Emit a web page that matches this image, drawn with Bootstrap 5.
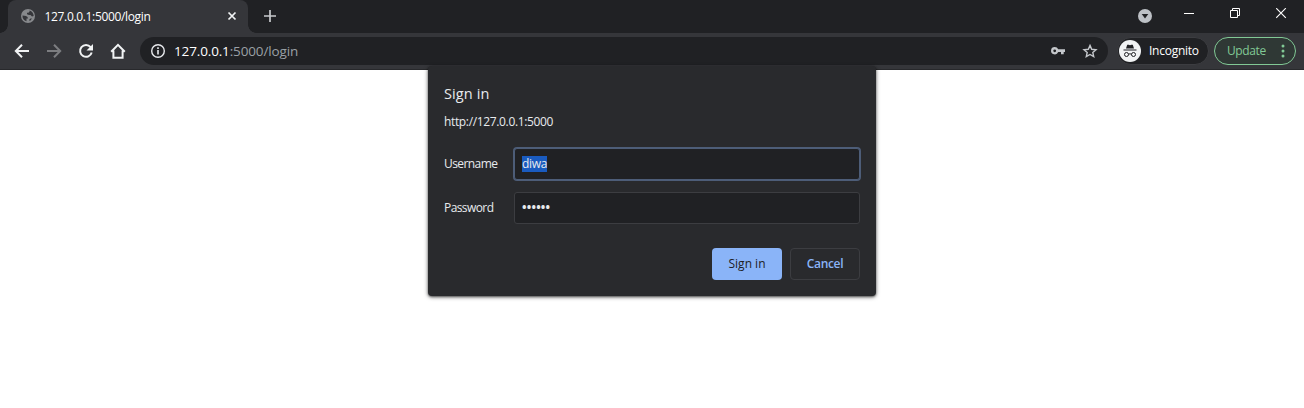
<!DOCTYPE html>
<html lang="en">
<head>
<meta charset="utf-8">
<meta name="viewport" content="width=device-width, initial-scale=1">
<title>127.0.0.1:5000/login</title>
<link href="https://cdn.jsdelivr.net/npm/bootstrap@5.3.0/dist/css/bootstrap.min.css" rel="stylesheet">
<style>
body{font-family:"Open Sans","Noto Sans",sans-serif;font-size:12px;line-height:16px;color:#e8eaed;background:#fff;height:408px;overflow:hidden}
svg{display:block;flex:none}
.tabstrip{height:33px;background:#202124;padding-left:8px}
.browser-tab{position:relative;width:240px;height:33px;background:#35363a;border-radius:8px 8px 0 0;padding:0 10px 0 12px}
.browser-tab::before,.browser-tab::after{content:"";position:absolute;bottom:0;width:8px;height:8px}
.browser-tab::before{left:-8px;background:radial-gradient(circle at 0 0,transparent 7.5px,#35363a 8px)}
.browser-tab::after{right:-8px;background:radial-gradient(circle at 100% 0,transparent 7.5px,#35363a 8px)}
.tab-title{margin-left:8.5px;font-size:12px;letter-spacing:-.34px;color:#fff}
.browser-tab>svg,.new-tab{margin-bottom:1px}
.new-tab{margin-left:15px}
.window-controls{height:33px}
.window-controls svg{margin:0 35px 6px 0}
.window-controls .tab-search{margin:0 32px 2px 0}
.window-controls .win-close{margin-right:17px}
.toolbar{height:37px;background:#35363a;border-bottom:1px solid #28292c;padding:0 8px 0 14px}
.omnibox{height:28px;width:968px;margin-left:14px;border-radius:14px;background:#202124;padding:0 10px}
.url{font-size:13.5px;letter-spacing:-.14px;margin-left:8px;color:#9aa0a6}
.incog{width:92px;height:28px;margin-left:9px;border:1px solid #3c3d41;border-radius:14px;background:#202124;padding-left:1px}
.incog-name{margin-left:8px;letter-spacing:-.25px}
.update{width:82px;height:28px;margin-left:5px;border:1px solid #81c995;border-radius:14px;background:#2f3835;color:#81c995;padding:0 10.5px 0 12px}
.update span{letter-spacing:-.38px}
.signin{position:relative;width:448px;height:230px;margin-top:-4px;background:#292a2d;border-radius:4px;padding:18px 16px 16px;box-shadow:0 1px 4px rgba(0,0,0,.55),0 1px 2px rgba(0,0,0,.4)}
.signin h1{font-size:14.5px;line-height:20px;font-weight:400;letter-spacing:.12px;margin:0 0 10px}
.origin{letter-spacing:-.35px;margin-bottom:18px}
.field-row{margin-bottom:12px}
.field-name{width:70px;letter-spacing:-.58px}
.signin .form-control{width:346px;height:32px;min-height:0;border:1px solid #3c3d41;border-radius:3px;background:#202124;color:#e8eaed;padding:7px;font-size:12px;line-height:16px}
.signin .focused{border-color:#4d5d78;box-shadow:0 0 0 1px #4d5d78}
.picked{background:#1a5bbf;color:#e8eaed;display:inline-block;height:16px;line-height:16px;letter-spacing:-.3px}
.signin .dots{letter-spacing:.2px;font-weight:700}
.signin .btn{width:70px;height:32px;padding:0;font-size:12px;line-height:16px;border-radius:4px;font-weight:500}
.signin .btn-go,.signin .btn-go:hover{background:#8ab4f8;color:#202124}
.signin .btn-stop,.signin .btn-stop:hover{border:1px solid #3c3d41;color:#8ab4f8;font-weight:600;letter-spacing:-.35px}
</style>
</head>
<body>
<header>
  <div class="tabstrip d-flex align-items-center">
    <div class="browser-tab d-flex align-items-center">
      <svg width="16" height="16" viewBox="0 0 16 16"><circle cx="8" cy="8" r="7" fill="#87898c"/><path d="M2.500 7.500 6 8l1.500 1 .5 1.500H6.500v2.800C4 12.700 2.200 10.500 2.500 7.500ZM9.500 2.500v1.300L8.300 4.700H7v1.500l2 .8h1.500L12 8.500 13.700 8c0-2.500-1.700-4.700-4.200-5.500ZM9 12l1.500-1.500H12L10 13Z" fill="#35363a"/></svg>
      <span class="tab-title">127.0.0.1:5000/login</span>
      <svg class="ms-auto" width="12" height="12" viewBox="0 0 12 12"><path d="m2.500 2.500 7 7m0-7-7 7" stroke="#f1f3f4" stroke-width="1.700"/></svg>
    </div>
    <svg class="new-tab" width="14" height="14" viewBox="0 0 14 14"><path d="M7 1v12M1 7h12" stroke="#c8cacd" stroke-width="1.700"/></svg>
    <div class="window-controls d-flex align-items-center ms-auto">
      <svg class="tab-search" width="14" height="14" viewBox="0 0 14 14"><circle cx="7" cy="7" r="7" fill="#bdc1c6"/><path d="M3.700 5h6.600L7 9.500Z" fill="#202124"/></svg>
      <svg width="11" height="11" viewBox="0 0 11 11"><path d="M0 5.500h10" stroke="#fff"/></svg>
      <svg width="11" height="11" viewBox="0 0 11 11"><path d="M.5 2.500h7v7h-7zM2.500 2.500v-2h7v7h-2" fill="none" stroke="#fff"/></svg>
      <svg class="win-close" width="11" height="11" viewBox="0 0 11 11"><path d="m.2.200 9.600 9.600m0-9.600-9.600 9.600" stroke="#fff" stroke-width="1.150"/></svg>
    </div>
  </div>
  <div class="toolbar d-flex align-items-center">
    <div class="d-flex gap-3">
      <svg width="16" height="16" viewBox="0 0 16 16"><path d="M15 8H2.500M8 1.700 1.800 8 8 14.300" fill="none" stroke="#f1f3f4" stroke-width="2"/></svg>
      <svg width="16" height="16" viewBox="0 0 16 16"><path d="M1 8h12.500M8 1.700 14.200 8 8 14.300" fill="none" stroke="#7c7d80" stroke-width="2"/></svg>
      <svg width="16" height="16" viewBox="0 0 16 16"><path d="M12.600 4.200A5.900 5.900 0 1 0 13.700 9.500" fill="none" stroke="#f1f3f4" stroke-width="2"/><path d="M15 1v6.500H8.500Z" fill="#f1f3f4"/></svg>
      <svg width="16" height="16" viewBox="0 0 16 16"><path d="M1.200 8.700 8 1.900l6.800 6.800M3.400 7.500v7.300h9.200V7.500" fill="none" stroke="#f1f3f4" stroke-width="2"/></svg>
    </div>
    <div class="omnibox d-flex align-items-center">
      <svg width="16" height="16" viewBox="0 0 16 16"><circle cx="8" cy="8" r="6.300" fill="none" stroke="#e8eaed" stroke-width="1.400"/><path d="M8 7v4.500M8 4.300V6" stroke="#e8eaed" stroke-width="1.600"/></svg>
      <span class="url"><span class="text-white">127.0.0.1</span>:5000/login</span>
      <svg class="ms-auto" width="16" height="16" viewBox="0 0 16 16"><path fill-rule="evenodd" d="M4.700 4a3.700 3.700 0 1 0 3.500 5H11v2.300h2.700V9H15V6.300H8.200A3.700 3.700 0 0 0 4.700 4Zm0 2.400a1.400 1.400 0 1 1 0 2.800 1.400 1.400 0 0 1 0-2.800Z" fill="#c4c7cb"/></svg>
      <svg class="ms-3" width="16" height="16" viewBox="0 0 16 16"><path d="m8 2.400 1.700 3.900 4.300.4-3.200 2.800.9 4.200L8 11.500l-3.700 2.200.9-4.200L2 6.700l4.300-.4Z" fill="none" stroke="#c4c7cb" stroke-width="1.400"/></svg>
    </div>
    <div class="incog d-flex align-items-center">
      <svg width="22" height="22" viewBox="0 0 22 22"><circle cx="11" cy="11" r="11" fill="#f1f3f4"/><path d="M4.500 9.500h13v1h-13ZM7 8.600l1.200-3.800h1.500l1.300.4 1.300-.4h1.500L15 8.600Z" fill="#202124"/><g fill="none" stroke="#202124"><circle cx="7.500" cy="14.500" r="2"/><circle cx="14.500" cy="14.500" r="2"/><path d="M9.500 14.200q1.500-.8 3 0"/></g></svg>
      <span class="incog-name text-white">Incognito</span>
    </div>
    <div class="update d-flex align-items-center justify-content-between">
      <span>Update</span>
      <svg width="4" height="14" viewBox="0 0 4 14"><g fill="#81c995"><circle cx="2" cy="2" r="1.500"/><circle cx="2" cy="7" r="1.500"/><circle cx="2" cy="12" r="1.500"/></g></svg>
    </div>
  </div>
</header>
<main>
  <form class="signin mx-auto">
    <h1>Sign in</h1>
    <div class="origin">http://127.0.0.1:5000</div>
    <div class="field-row d-flex align-items-center">
      <span class="field-name">Username</span>
      <div class="form-control focused"><span class="picked">diwa</span></div>
    </div>
    <div class="d-flex align-items-center">
      <span class="field-name">Password</span>
      <div class="form-control dots">••••••</div>
    </div>
    <div class="d-flex justify-content-end gap-2 mt-4">
      <button class="btn btn-go" type="button">Sign in</button>
      <button class="btn btn-stop" type="button">Cancel</button>
    </div>
  </form>
</main>
<script src="https://cdn.jsdelivr.net/npm/bootstrap@5.3.0/dist/js/bootstrap.bundle.min.js"></script>
</body>
</html>
